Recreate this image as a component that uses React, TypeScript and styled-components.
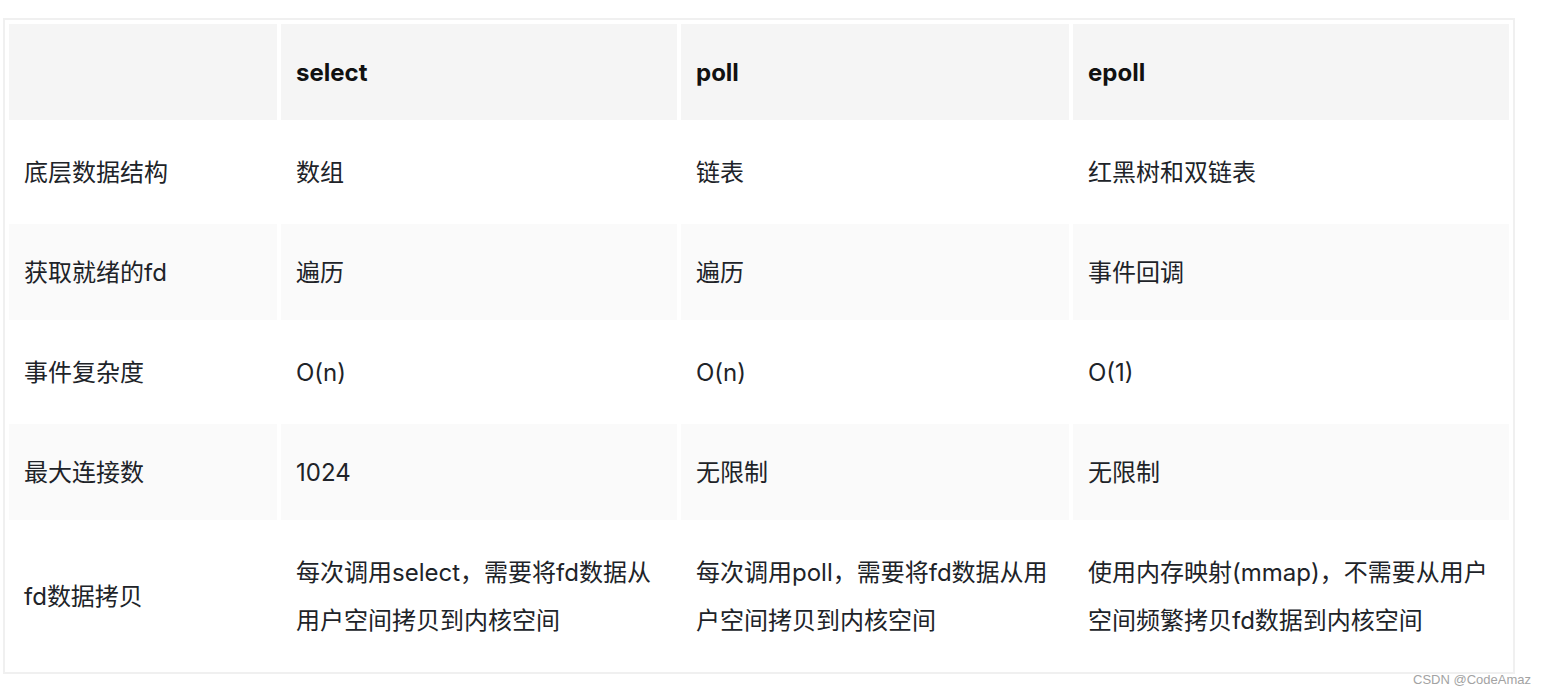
import React from 'react';
import styled, { createGlobalStyle } from 'styled-components';

const GlobalStyle = createGlobalStyle`
  body {
    margin: 0;
    background: #ffffff;
    font-family: 'Inter', 'Noto Sans CJK SC', sans-serif;
  }
`;

interface Row {
  label: React.ReactNode;
  select: React.ReactNode;
  poll: React.ReactNode;
  epoll: React.ReactNode;
}

const ROWS: Row[] = [
  { label: '底层数据结构', select: '数组', poll: '链表', epoll: '红黑树和双链表' },
  { label: '获取就绪的fd', select: '遍历', poll: '遍历', epoll: '事件回调' },
  { label: '事件复杂度', select: 'O(n)', poll: 'O(n)', epoll: 'O(1)' },
  { label: '最大连接数', select: '1024', poll: '无限制', epoll: '无限制' },
  {
    label: 'fd数据拷贝',
    select: (
      <>
        每次调用select，需要将fd数据从
        <br />
        用户空间拷贝到内核空间
      </>
    ),
    poll: (
      <>
        每次调用poll，需要将fd数据从用
        <br />
        户空间拷贝到内核空间
      </>
    ),
    epoll: (
      <>
        使用内存映射(mmap)，不需要从用户
        <br />
        空间频繁拷贝fd数据到内核空间
      </>
    ),
  },
];

const Page = styled.div`
  padding: 18px 0 0 3px;
  display: flex;
  flex-direction: column;
  align-items: flex-start;
`;

const Table = styled.table`
  width: 1512px;
  table-layout: fixed;
  border-collapse: separate;
  border-spacing: 4px;
  border: 2px solid #f0f0f0;
  box-sizing: border-box;
`;

const HeadCell = styled.th`
  background: #f5f5f5;
  padding: 25px 15px 23px;
  line-height: 48px;
  font-size: 24px;
  font-weight: 700;
  color: #111111;
  text-align: left;
`;

const BodyRow = styled.tr<{ $striped: boolean }>`
  background: ${({ $striped }) => ($striped ? '#fafafa' : '#ffffff')};
`;

const Cell = styled.td`
  padding: 25px 15px 23px;
  line-height: 48px;
  font-size: 24px;
  color: #202328;
  vertical-align: middle;
  white-space: nowrap;
`;

const Footer = styled.div`
  width: 1528px;
  margin-top: -2px;
  display: flex;
  justify-content: flex-end;
`;

const Watermark = styled.span`
  font-family: 'Liberation Sans', Arial, sans-serif;
  font-size: 13px;
  line-height: 15px;
  color: #a3a3a3;
`;

export default function App() {
  return (
    <Page>
      <GlobalStyle />
      <Table>
        <colgroup>
          <col style={{ width: 268 }} />
          <col style={{ width: 396 }} />
          <col style={{ width: 388 }} />
          <col style={{ width: 436 }} />
        </colgroup>
        <thead>
          <tr>
            <HeadCell />
            <HeadCell>select</HeadCell>
            <HeadCell>poll</HeadCell>
            <HeadCell>epoll</HeadCell>
          </tr>
        </thead>
        <tbody>
          {ROWS.map((row, i) => (
            <BodyRow key={i} $striped={i % 2 === 1}>
              <Cell>{row.label}</Cell>
              <Cell>{row.select}</Cell>
              <Cell>{row.poll}</Cell>
              <Cell>{row.epoll}</Cell>
            </BodyRow>
          ))}
        </tbody>
      </Table>
      <Footer>
        <Watermark>CSDN @CodeAmaz</Watermark>
      </Footer>
    </Page>
  );
}
